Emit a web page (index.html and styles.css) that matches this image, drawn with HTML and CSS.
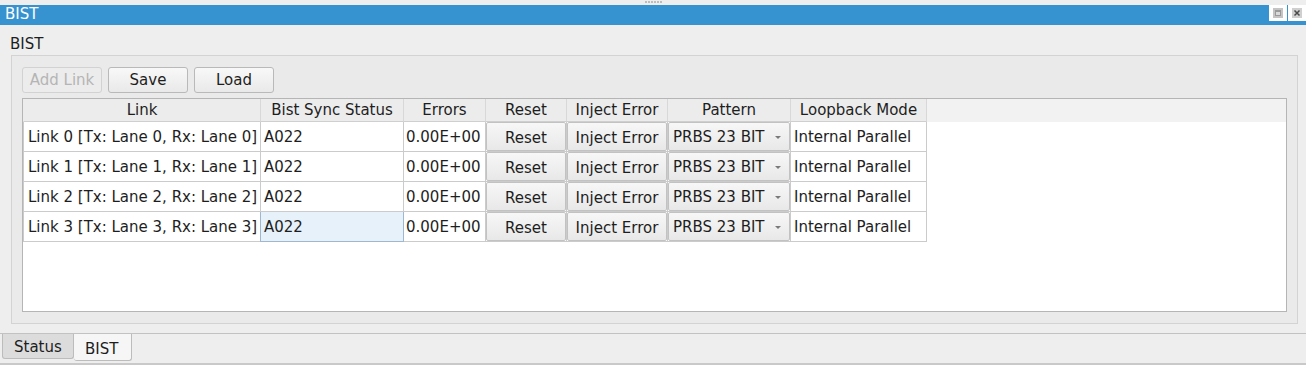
FILE: index.html
```html
<!DOCTYPE html>
<html lang="en">
<head>
  <meta charset="UTF-8" />
  <title>BIST</title>
  <link rel="stylesheet" href="styles.css">
</head>
<body>
  <div class="grip"><span class="dots"></span></div>

  <div class="titlebar">
    <span class="title">BIST</span>
    <div class="win-btns">
      <span class="win-btn">
        <svg width="12" height="12" viewBox="0 0 12 12">
          <rect x="1" y="1" width="10" height="10" fill="#c4c4c4"/>
          <rect x="3" y="3" width="6" height="6" fill="#9a9a9a"/>
          <rect x="4" y="5" width="4" height="3" fill="#dadada"/>
        </svg>
      </span>
      <span class="win-btn">
        <svg width="12" height="12" viewBox="0 0 12 12">
          <rect x="1" y="1" width="10" height="10" fill="#cfcfcf"/>
          <path d="M3.5 3.5 L8.5 8.5 M8.5 3.5 L3.5 8.5" stroke="#4a4a4a" stroke-width="1.5"/>
        </svg>
      </span>
    </div>
  </div>

  <div class="pane">
    <div class="pane-label">BIST</div>
    <div class="group">
      <div class="toolbar">
        <button class="btn" disabled>Add Link</button>
        <button class="btn">Save</button>
        <button class="btn">Load</button>
      </div>

      <div class="grid-frame">
        <div class="row head">
          <div class="cell">Link</div>
          <div class="cell">Bist Sync Status</div>
          <div class="cell">Errors</div>
          <div class="cell">Reset</div>
          <div class="cell">Inject Error</div>
          <div class="cell">Pattern</div>
          <div class="cell">Loopback Mode</div>
          <div class="cell filler"></div>
        </div>
        <div id="rows"></div>
      </div>
    </div>
  </div>

  <div class="tabs">
    <div class="tab">Status</div>
    <div class="tab active">BIST</div>
  </div>
  <div class="bottom-bar"></div>

  <script>
    const links = [0, 1, 2, 3];
    document.getElementById("rows").innerHTML = links.map(n => `
      <div class="row">
        <div class="cell first">Link ${n} [Tx: Lane ${n}, Rx: Lane ${n}]</div>
        <div class="cell${n === 3 ? " editing" : ""}">A022</div>
        <div class="cell errors">0.00E+00</div>
        <div class="cell tight"><button class="cell-btn">Reset</button></div>
        <div class="cell tight"><button class="cell-btn">Inject Error</button></div>
        <div class="cell tight">
          <div class="combo">PRBS 23 BIT<span class="arrow"></span></div>
        </div>
        <div class="cell">Internal Parallel</div>
        <div class="cell filler"></div>
      </div>
    `).join("");
  </script>
</body>
</html>
```

FILE: styles.css
```css
* { box-sizing: border-box; }
body {
  margin: 0;
  width: 1306px;
  height: 365px;
  overflow: hidden;
  font-family: "DejaVu Sans", sans-serif;
  font-size: 15px;
  color: #1e1e1e;
  background: #eeeeee;
}

.grip {
  height: 5px;
  display: flex;
  justify-content: center;
  padding-top: 1px;
}

.dots {
  width: 18px;
  height: 2px;
  margin-left: 2px;
  background: repeating-linear-gradient(90deg, #bdbdbd 0 2px, transparent 2px 3px);
}

.titlebar {
  height: 20px;
  background: #3693d0;
  color: white;
  display: flex;
  justify-content: space-between;
  align-items: flex-start;
}

.title {
  padding-left: 5px;
  line-height: 19px;
}

.win-btns {
  display: flex;
  gap: 1px;
}

.win-btn {
  width: 18px;
  height: 16px;
  background: white;
  display: flex;
  align-items: center;
  justify-content: center;
}

.pane {
  height: 308px;
  padding: 10px 8px 0 11px;
}

.pane-label {
  height: 18px;
  line-height: 18px;
  margin: 0 0 2px -1px;
}

.group {
  border: 1px solid #d3d3d3;
  background: #eaeaea;
  padding: 11px 10px;
}

.toolbar {
  display: flex;
  gap: 6px;
  margin-bottom: 5px;
}

.btn {
  width: 80px;
  height: 26px;
  font: inherit;
  color: #1e1e1e;
  border: 1px solid #b9b9b9;
  border-radius: 3px;
  background: linear-gradient(#f8f8f8, #e9e9e9);
  padding: 0;
}

.btn:disabled {
  color: #b5b5b5;
  border-color: #d2d2d2;
  background: #ececec;
}

.grid-frame {
  height: 214px;
  border: 1px solid #b5b5b5;
  background: white;
}

.row {
  display: grid;
  grid-template-columns: 238px 143px 82px 81px 101px 123px 136px 1fr;
  height: 30px;
}

.cell {
  border-right: 1px solid #cbcbcb;
  border-bottom: 1px solid #cbcbcb;
  padding-left: 3px;
  line-height: 30px;
  white-space: nowrap;
  overflow: hidden;
}

.cell.first {
  border-left: 1px solid #cbcbcb;
  padding-left: 4px;
}

.cell.errors { padding-left: 2px; }

.cell.filler { border: none; }

.cell.tight { padding: 0; }

.cell.editing {
  background: #e6f1fa;
  border: 1px solid #9fb7cf;
  border-top: none;
  margin-left: -1px;
  padding-left: 3px;
}

.row.head {
  height: 23px;
  background: #ececec;
}

.row.head .cell {
  text-align: center;
  line-height: 23px;
  border-right-color: #d8d8d8;
  border-bottom-color: #cfcfcf;
  padding: 0;
}

.row.head .cell:first-child { border-left: 1px solid #ececec; }

.row.head .cell.filler {
  background: #f2f2f2;
  border-bottom: 1px solid #f2f2f2;
}

.cell-btn {
  width: 100%;
  height: 29px;
  font: inherit;
  color: #1e1e1e;
  border: 1px solid #c2c2c2;
  border-radius: 2px;
  background: linear-gradient(#f7f7f7, #e8e8e8);
  padding: 0;
  display: block;
}

.combo {
  height: 29px;
  border: 1px solid #c2c2c2;
  border-radius: 2px;
  background: linear-gradient(#f7f7f7, #e8e8e8);
  padding-left: 4px;
  line-height: 28px;
  position: relative;
}

.arrow {
  position: absolute;
  right: 8px;
  top: 13px;
  border-left: 3px solid transparent;
  border-right: 3px solid transparent;
  border-top: 3px solid #7a7a7a;
}

.tabs {
  height: 30px;
  border-top: 1px solid #c2c2c2;
  display: flex;
  align-items: flex-start;
  padding-left: 2px;
}

.tab {
  height: 25px;
  width: 72px;
  line-height: 24px;
  padding: 1px 0 0 11px;
  background: #dcdcdc;
  border: 1px solid #bcbcbc;
  border-top: none;
  border-radius: 0 0 3px 3px;
}

.tab.active {
  height: 27px;
  width: 58px;
  line-height: 26px;
  padding: 2px 0 0 11px;
  background: #f6f6f6;
  border-left: none;
}

.bottom-bar {
  height: 2px;
  background: #c9c9c9;
}
```
